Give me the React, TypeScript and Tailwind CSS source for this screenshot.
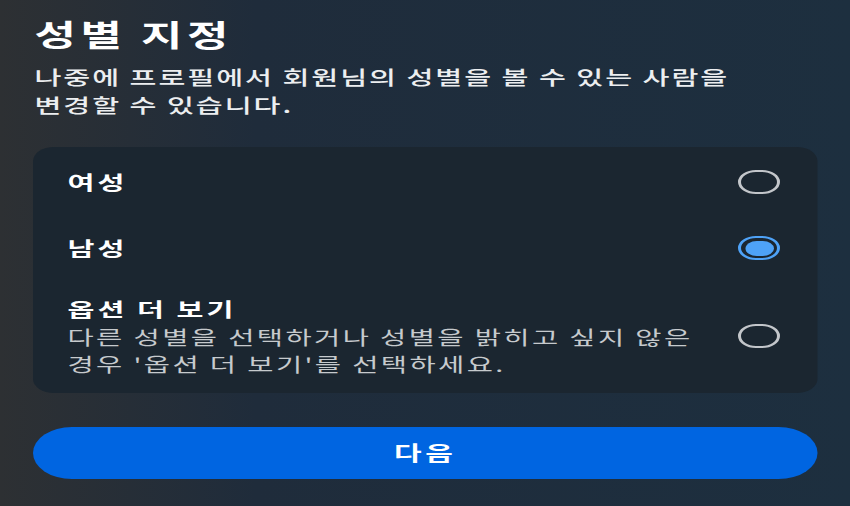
import React, { useState } from 'react';

type Option = {
  id: string;
  label: string;
  desc?: string[];
};

const options: Option[] = [
  { id: 'female', label: '여성' },
  { id: 'male', label: '남성' },
  {
    id: 'more',
    label: '옵션 더 보기',
    desc: ['다른 성별을 선택하거나 성별을 밝히고 싶지 않은', "경우 '옵션 더 보기'를 선택하세요."],
  },
];

const Radio = ({ checked }: { checked: boolean }) =>
  checked ? (
    <div className="flex h-[24px] w-[28px] shrink-0 rounded-full border-[2.5px] border-[#4ea2f7] p-[2.5px]">
      <div className="flex-1 rounded-full bg-[#4ea2f7]" />
    </div>
  ) : (
    <div className="h-[24px] w-[28px] shrink-0 rounded-full border-[2.5px] border-[#c3c6ca]" />
  );

export default function App() {
  const [selected, setSelected] = useState('male');

  return (
    <div
      className="h-[506px] w-[850px] overflow-hidden bg-gradient-to-r from-[#2d3033] via-[#1f2c3b] via-30% to-[#1d2f3f]"
      style={{ fontFamily: '"Noto Sans CJK KR", "Noto Sans", sans-serif' }}
    >
      {/* the capture is stretched sideways, so the layout is built narrow and widened */}
      <div className="w-[567px] origin-top-left scale-x-150 px-[22px] pt-[15px]">
        <h1 className="pl-[1px] text-[30px] font-bold leading-[36px] tracking-[3px] text-white">성별 지정</h1>
        <p className="mt-[12px] pl-[1px] text-[19.5px] font-medium leading-[28px] tracking-[1.3px] text-[#eceef0]">
          나중에 프로필에서 회원님의 성별을 볼 수 있는 사람을
          <br />
          변경할 수 있습니다.
        </p>

        <div className="mt-[28px] flex flex-col rounded-[14px] bg-[#1b2630] pb-[16px] pl-[23px] pr-[25px] pt-[2px]">
          {options.map((opt) => (
            <button
              key={opt.id}
              onClick={() => setSelected(opt.id)}
              className={`flex items-center justify-between text-left ${
                opt.desc ? 'pt-[14px]' : 'h-[66px]'
              }`}
            >
              <div>
                <div className="text-[19.5px] font-bold leading-[28px] tracking-[2px] text-white">{opt.label}</div>
                {opt.desc?.map((line) => (
                  <div key={line} className="text-[19px] leading-[27px] tracking-[1.6px] text-[#c6cacd]">
                    {line}
                  </div>
                ))}
              </div>
              <Radio checked={selected === opt.id} />
            </button>
          ))}
        </div>

        <button className="mt-[34px] flex h-[52px] w-full items-center justify-center rounded-full bg-[#0065e1] text-[20px] font-semibold tracking-[2.5px] text-white">
          다음
        </button>
      </div>
    </div>
  );
}
